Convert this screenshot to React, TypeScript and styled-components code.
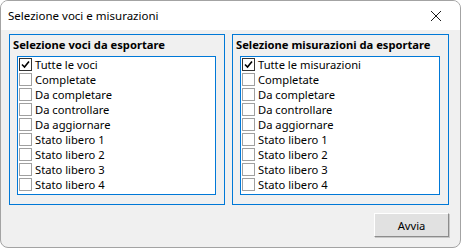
import styled, { createGlobalStyle } from 'styled-components';

const Global = createGlobalStyle`
  html, body {
    margin: 0;
    padding: 0;
    background: #ffffff;
  }
  body {
    font-family: "Noto Sans", "Open Sans", sans-serif;
    font-size: 11px;
    color: #000000;
  }
`;

const Window = styled.div`
  width: 461px;
  height: 248px;
  box-sizing: border-box;
  display: flex;
  flex-direction: column;
  background: #f0f0f0;
  border: 1px solid #a3a3a3;
  border-radius: 8px;
  overflow: hidden;
`;

const TitleBar = styled.div`
  height: 29px;
  display: flex;
  align-items: center;
  justify-content: space-between;
  background: #ffffff;
  padding: 0 18px 0 7px;
`;

const Title = styled.span`
  font-size: 11.5px;
  margin-top: -1px;
`;

const Body = styled.div`
  flex: 1;
  display: flex;
  flex-direction: column;
  padding: 4px 11px 10px 8px;
`;

const Groups = styled.div`
  display: grid;
  grid-template-columns: 216px 217px;
  gap: 7px;
`;

const Group = styled.div`
  height: 171px;
  box-sizing: border-box;
  border: 1px solid #0078d7;
  display: flex;
  flex-direction: column;
`;

const Heading = styled.div`
  font-weight: bold;
  font-size: 11.2px;
  height: 21px;
  line-height: 20px;
  padding-left: 3px;
`;

const List = styled.div`
  margin: 0 8px 9px 7px;
  flex: 1;
  background: #ffffff;
  border: 1px solid #0078d7;
`;

const Row = styled.label`
  display: flex;
  align-items: center;
  height: 15px;
  line-height: 14px;
  padding-left: 1px;
  gap: 3px;
  white-space: nowrap;
  font-size: 11.2px;
`;

const Box = styled.span<{ $checked: boolean }>`
  width: 11px;
  height: 11px;
  border: 1px solid ${(p) => (p.$checked ? '#333333' : '#a0a0a0')};
  background: #ffffff;
  display: flex;
  align-items: center;
  justify-content: center;
  flex: none;
`;

const Footer = styled.div`
  margin-top: auto;
  display: flex;
  justify-content: flex-end;
`;

const Button = styled.button`
  width: 75px;
  height: 24px;
  font-family: inherit;
  font-size: 11.2px;
  color: #000000;
  background: #e1e1e1;
  border: 1px solid;
  border-color: #ffffff #8c8c8c #8c8c8c #ffffff;
  box-shadow: 1px 1px 0 #c8c8c8;
  padding: 0;
`;

const Close = () => (
  <svg width="12" height="12" viewBox="0 0 12 12">
    <path d="M1 1 L11 11 M11 1 L1 11" stroke="#1a1a1a" strokeWidth="1" fill="none" />
  </svg>
);

const Check = () => (
  <svg width="9" height="9" viewBox="0 0 9 9">
    <path d="M1 4.5 L3.5 7 L8 1.5" stroke="#000" strokeWidth="1.6" fill="none" />
  </svg>
);

const stati = [
  'Completate',
  'Da completare',
  'Da controllare',
  'Da aggiornare',
  'Stato libero 1',
  'Stato libero 2',
  'Stato libero 3',
  'Stato libero 4',
];

const CheckList = ({ first }: { first: string }) => (
  <List>
    {[first, ...stati].map((label, i) => (
      <Row key={label}>
        <Box $checked={i === 0}>{i === 0 && <Check />}</Box>
        {label}
      </Row>
    ))}
  </List>
);

export default function App() {
  return (
    <>
      <Global />
      <Window>
        <TitleBar>
          <Title>Selezione voci e misurazioni</Title>
          <Close />
        </TitleBar>
        <Body>
          <Groups>
            <Group>
              <Heading>Selezione voci da esportare</Heading>
              <CheckList first="Tutte le voci" />
            </Group>
            <Group>
              <Heading>Selezione misurazioni da esportare</Heading>
              <CheckList first="Tutte le misurazioni" />
            </Group>
          </Groups>
          <Footer>
            <Button>Avvia</Button>
          </Footer>
        </Body>
      </Window>
    </>
  );
}
